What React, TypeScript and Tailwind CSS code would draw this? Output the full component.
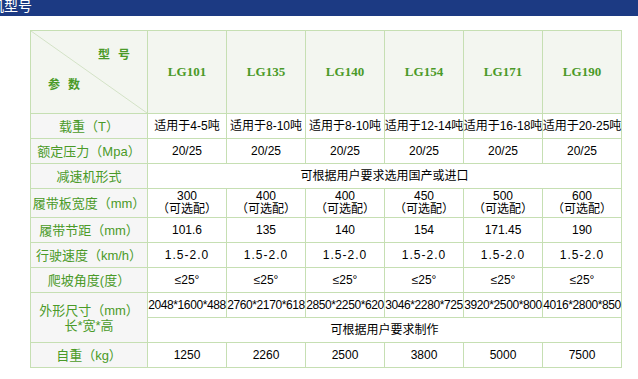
import React from "react";

const font = "font-['Liberation_Sans','Noto_Sans_CJK_SC',sans-serif]";
const models = ["LG101", "LG135", "LG140", "LG154", "LG171", "LG190"];

function Label({ children, className = "" }: { children: React.ReactNode; className?: string }) {
  return (
    <div className={`bg-[#f6f6f6] text-[#4a9a28] text-[13px] leading-[15px] flex flex-col items-center justify-center whitespace-nowrap ${className}`}>
      {children}
    </div>
  );
}

function Cell({ children, className = "" }: { children: React.ReactNode; className?: string }) {
  return (
    <div className={`bg-white text-black text-[12px] leading-[13px] flex flex-col items-center justify-center whitespace-nowrap overflow-visible ${className}`}>
      {children}
    </div>
  );
}

export default function App() {
  const row = (label: React.ReactNode, vals: React.ReactNode[]) => (
    <>
      <Label>{label}</Label>
      {vals.map((v, i) => (
        <Cell key={i}>{v}</Cell>
      ))}
    </>
  );
  return (
    <div className={`w-[638px] h-[379px] bg-white overflow-hidden ${font}`}>
      <div className="h-[16px] bg-[#1c3a83] overflow-hidden">
        <div className="text-white text-[14px] leading-[14px] -mt-[2px] -ml-[10px] font-['Noto_Sans_CJK_SC',sans-serif]">机型号</div>
      </div>
      <div className="pl-[30px] pt-[14px]">
        <div className="grid w-[592px] grid-cols-[116px_repeat(6,78px)] grid-rows-[82px_24px_24px_24px_28px_24px_24px_24px_24px_24px_24px] gap-px p-px bg-[#c6dfb3]">
          <div className="relative bg-[#f3f6f0] text-[#4a9a28] font-bold text-[12px] leading-[12px]">
            <svg className="absolute inset-0" width="116" height="82" viewBox="0 0 116 82">
              <line x1="0" y1="0" x2="116" y2="82" stroke="#d3e2c6" strokeWidth="1" />
            </svg>
            <div className="absolute left-[67px] top-[18px] tracking-[8px]">型号</div>
            <div className="absolute left-[17px] top-[48px] tracking-[8px]">参数</div>
          </div>
          {models.map((m) => (
            <div key={m} className="bg-[#f3f6f0] flex items-center justify-center text-[#4a9a28] font-bold text-[13px] font-['Liberation_Serif',serif]">
              {m}
            </div>
          ))}
          {row("载重（T）", ["适用于4-5吨", "适用于8-10吨", "适用于8-10吨", "适用于12-14吨", "适用于16-18吨", "适用于20-25吨"])}
          {row("额定压力（Mpa）", ["20/25", "20/25", "20/25", "20/25", "20/25", "20/25"])}
          <Label>减速机形式</Label>
          <Cell className="col-span-6">可根据用户要求选用国产或进口</Cell>
          {row(
            "履带板宽度（mm）",
            ["300", "400", "400", "450", "500", "600"].map((v) => (
              <>
                <span>{v}</span>
                <span>（可选配）</span>
              </>
            ))
          )}
          {row("履带节距（mm）", ["101.6", "135", "140", "154", "171.45", "190"])}
          {row("行驶速度（km/h）", Array(6).fill(<span className="tracking-[1px]">1.5-2.0</span>))}
          {row("爬坡角度(度）", Array(6).fill("≤25°"))}
          <Label className="row-span-2">
            <span>外形尺寸（mm）</span>
            <span>长*宽*高</span>
          </Label>
          {["2048*1600*488", "2760*2170*618", "2850*2250*620", "3046*2280*725", "3920*2500*800", "4016*2800*850"].map((v) => (
            <Cell key={v} className="tracking-[-0.4px]">{v}</Cell>
          ))}
          <Cell className="col-span-6">可根据用户要求制作</Cell>
          {row("自重（kg）", ["1250", "2260", "2500", "3800", "5000", "7500"])}
        </div>
      </div>
    </div>
  );
}
